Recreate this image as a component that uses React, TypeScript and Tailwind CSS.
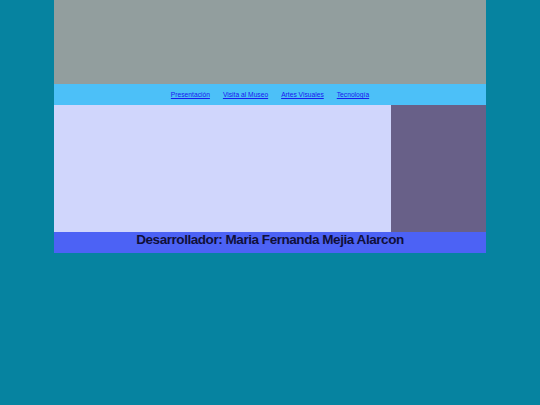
export default function App() {
  const links = ['Presentación', 'Visita al Museo', 'Artes Visuales', 'Tecnología'];

  return (
    <div className="min-h-screen w-full bg-[#0683a0] font-['Liberation_Sans',Arial,sans-serif]">
      <div className="mx-auto w-[432px]">
        <header className="h-[84px] bg-[#929e9e]"></header>

        <nav className="flex h-[21px] items-center justify-center gap-[13px] bg-[#4cc0f8] pt-[1px]">
          {links.map((l) => (
            <a key={l} href="#" className="text-[6.7px] text-[#1a1aee] underline">
              {l}
            </a>
          ))}
        </nav>

        <div className="flex h-[127px]">
          <main className="flex-1 bg-[#d0d6fc]"></main>
          <aside className="w-[95px] bg-[#686088]"></aside>
        </div>

        <footer className="h-[21px] bg-[#4c62f5] text-center">
          <h3 className="text-[13.5px] leading-[14px] pt-[1px] font-bold tracking-[-0.45px] text-[#10103a]">
            Desarrollador: Maria Fernanda Mejia Alarcon
          </h3>
        </footer>
      </div>
    </div>
  );
}
